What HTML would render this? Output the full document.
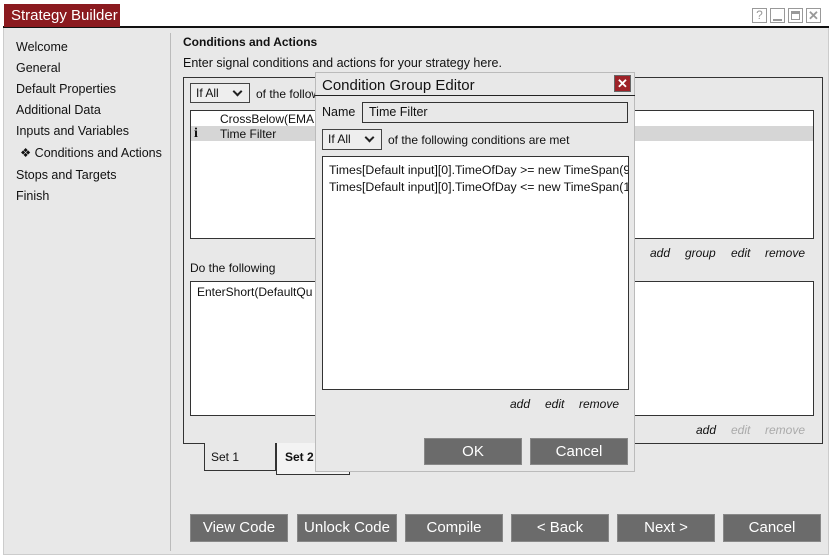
<!DOCTYPE html>
<html><head><style>
*{box-sizing:border-box;margin:0;padding:0}
body{width:832px;height:558px;background:#fff;font-family:"Liberation Sans",sans-serif;font-size:12px;color:#111;position:relative;overflow:hidden}
.a{position:absolute}
.btn{position:absolute;background:#6b6b6b;color:#fff;font-size:15px;text-align:center;line-height:26px;border:1px solid #888}
.lnk{position:absolute;font-style:italic;font-size:12px}
.sel{position:absolute;border:1px solid #444;background:#eee;font-size:12px;padding-left:5px;line-height:18px}
.sel:after{content:"";position:absolute;right:8px;top:4px;width:5px;height:5px;border-right:2px solid #222;border-bottom:2px solid #222;transform:rotate(45deg)}
.nav div{height:21px;font-size:12.5px}
.wb{position:absolute;top:8px;width:15px;height:15px;border:1px solid #999}
</style></head><body>
<div class="a" style="left:3px;top:4px;width:826px;height:551px;border:1px solid #ccc;background:#e8e8e8"></div>
<div class="a" style="left:3px;top:4px;width:826px;height:24px;background:#fff;border-bottom:2px solid #111"></div>
<div class="a" style="left:4px;top:4px;width:116px;height:23px;background:#8b1a1f;color:#fff;font-size:15px;line-height:23px;padding-left:7px">Strategy Builder</div>
<div class="wb" style="left:752px;color:#999;font-size:12px;text-align:center;line-height:13px">?</div>
<div class="wb" style="left:770px"><div class="a" style="left:2px;top:10px;width:9px;height:2px;background:#999"></div></div>
<div class="wb" style="left:788px"><div class="a" style="left:2px;top:2px;width:9px;height:9px;border:1px solid #999;border-top:3px solid #999"></div></div>
<div class="wb" style="left:806px;color:#999;font-size:13px;font-weight:bold;text-align:center;line-height:13px">✕</div>
<div class="a" style="left:170px;top:33px;width:1px;height:518px;background:#bbb"></div>
<div class="a nav" style="left:16px;top:40px">
<div>Welcome</div><div>General</div><div>Default Properties</div><div>Additional Data</div><div>Inputs and Variables</div>
<div style="padding-left:4px;height:23px">❖ Conditions and Actions</div><div>Stops and Targets</div><div>Finish</div></div>
<div class="a" style="left:183px;top:35px;font-weight:bold;font-size:12px">Conditions and Actions</div>
<div class="a" style="left:183px;top:56px;font-size:12.5px">Enter signal conditions and actions for your strategy here.</div>
<div class="a" style="left:183px;top:77px;width:640px;height:367px;border:1px solid #333"></div>
<div class="sel" style="left:190px;top:83px;width:60px;height:20px">If All</div>
<div class="a" style="left:256px;top:87px">of the following conditions are met</div>
<div class="a" style="left:190px;top:110px;width:624px;height:129px;border:1px solid #333;background:#fff"></div>
<div class="a" style="left:191px;top:126px;width:622px;height:15px;background:#d6d6d6"></div>
<div class="a" style="left:220px;top:112px">CrossBelow(EMA</div>
<div class="a" style="left:194px;top:126px;font-family:'Liberation Serif',serif;font-weight:bold;font-size:14px">i</div>
<div class="a" style="left:220px;top:127px">Time Filter</div>
<div class="lnk" style="left:650px;top:246px">add</div><div class="lnk" style="left:685px;top:246px">group</div><div class="lnk" style="left:731px;top:246px">edit</div><div class="lnk" style="left:765px;top:246px">remove</div>
<div class="a" style="left:190px;top:261px">Do the following</div>
<div class="a" style="left:190px;top:281px;width:624px;height:135px;border:1px solid #333;background:#fff"></div>
<div class="a" style="left:197px;top:285px">EnterShort(DefaultQu</div>
<div class="lnk" style="left:696px;top:423px">add</div><div class="lnk" style="left:731px;top:423px;color:#aaa">edit</div><div class="lnk" style="left:765px;top:423px;color:#aaa">remove</div>
<div class="a" style="left:204px;top:443px;width:72px;height:28px;border:1px solid #333;border-top:none;background:#e8e8e8;padding:7px 0 0 6px">Set 1</div>
<div class="a" style="left:276px;top:443px;width:74px;height:32px;border:1px solid #333;border-top:none;background:#f3f3f3;padding:7px 0 0 8px;font-weight:bold">Set 2</div>
<div class="btn" style="left:190px;top:514px;width:98px;height:28px">View Code</div>
<div class="btn" style="left:297px;top:514px;width:100px;height:28px">Unlock Code</div>
<div class="btn" style="left:405px;top:514px;width:98px;height:28px">Compile</div>
<div class="btn" style="left:511px;top:514px;width:98px;height:28px">&lt; Back</div>
<div class="btn" style="left:617px;top:514px;width:98px;height:28px">Next &gt;</div>
<div class="btn" style="left:723px;top:514px;width:98px;height:28px">Cancel</div>
<!-- dialog -->
<div class="a" style="left:315px;top:72px;width:320px;height:400px;background:#e8e8e8;border:1px solid #bbb"></div>
<div class="a" style="left:315px;top:72px;width:320px;height:24px;border-bottom:1px solid #222"></div>
<div class="a" style="left:322px;top:77px;font-size:15px">Condition Group Editor</div>
<div class="a" style="left:614px;top:75px;width:17px;height:17px;background:#9e2228;border:1px solid #666;color:#fff;font-weight:bold;font-size:13px;text-align:center;line-height:15px">✕</div>
<div class="a" style="left:322px;top:105px;font-size:12.5px">Name</div>
<div class="a" style="left:362px;top:102px;width:266px;height:21px;border:1px solid #333;padding-left:6px;line-height:19px;font-size:12.5px">Time Filter</div>
<div class="sel" style="left:322px;top:129px;width:60px;height:21px;line-height:19px">If All</div>
<div class="a" style="left:388px;top:133px">of the following conditions are met</div>
<div class="a" style="left:322px;top:156px;width:307px;height:234px;border:1px solid #333;background:#fff;overflow:hidden;font-size:12.3px">
<div style="position:absolute;left:6px;top:6px;white-space:nowrap">Times[Default input][0].TimeOfDay &gt;= new TimeSpan(9</div>
<div style="position:absolute;left:6px;top:23px;white-space:nowrap">Times[Default input][0].TimeOfDay &lt;= new TimeSpan(1</div></div>
<div class="lnk" style="left:510px;top:397px">add</div><div class="lnk" style="left:545px;top:397px">edit</div><div class="lnk" style="left:579px;top:397px">remove</div>
<div class="btn" style="left:424px;top:438px;width:98px;height:27px">OK</div>
<div class="btn" style="left:530px;top:438px;width:98px;height:27px">Cancel</div>
</body></html>
